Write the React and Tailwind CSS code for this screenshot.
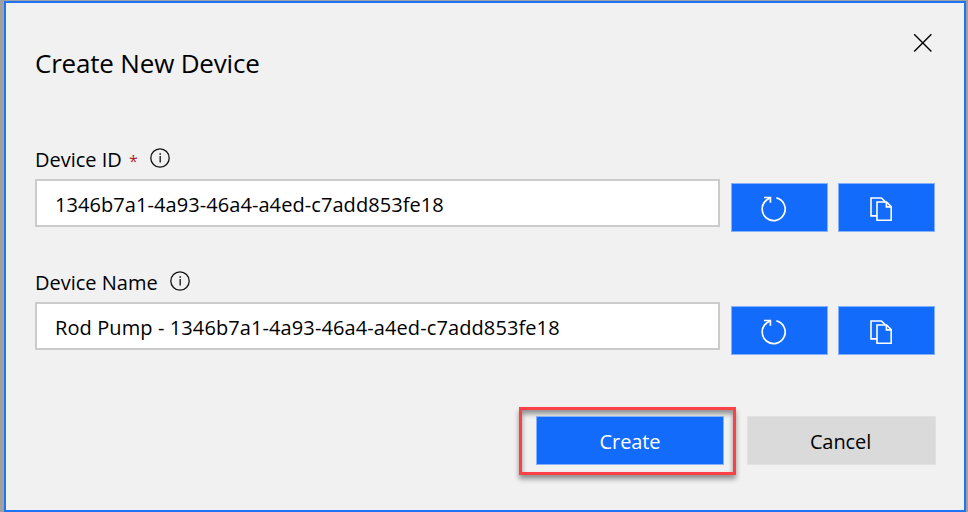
import React from "react";

function CloseIcon() {
  return (
    <svg width="20" height="20" viewBox="0 0 20 20" fill="none" stroke="#000" strokeWidth="1.4">
      <path d="M1.2 1.2 18.4 18.4M18.4 1.2 1.2 18.4" />
    </svg>
  );
}

function InfoIcon() {
  return (
    <svg width="20" height="20" viewBox="0 0 20 20" fill="none" stroke="#111" strokeWidth="1.3">
      <circle cx="10" cy="10" r="9.2" />
      <path d="M10.2 8v6.4" />
      <path d="M10.2 5.2v1.5" strokeWidth="1.5" />
    </svg>
  );
}

function RefreshIcon() {
  return (
    <svg width="26" height="26" viewBox="0 0 26 26" fill="none" stroke="#fff" strokeWidth="1.7">
      <path d="M16.4 1.9A11.5 11.5 0 1 1 6.6 4Q8.3 2.9 10 1.8" />
      <path d="M4 1.5H10.4V6.8" />
    </svg>
  );
}

function CopyIcon() {
  return (
    <svg width="22" height="24" viewBox="0 0 22 24" fill="none" stroke="#fff" strokeWidth="1.6">
      <path d="M7 18.9H1V1h10.4L15.4 4.8" />
      <path d="M7 5h9.6l4.6 4.6v13.6H7z" />
      <path d="M16.4 5v4.9H21" />
    </svg>
  );
}

function IconButton({ label, className, children }) {
  return (
    <button aria-label={label} className={"flex h-[49px] w-[97px] shrink-0 border border-[#83b2fb] bg-[#136bfb] " + className}>
      {children}
    </button>
  );
}

function Field({ label, required, value, valueSpacing }) {
  return (
    <div className="h-[123px]">
      <div className="flex h-[30px] items-start">
        <span className="mt-px text-[20px] leading-[24px] whitespace-nowrap">
          {label}
          {required && <span className="ml-[7px] text-[16px] text-[#a4262c]">*</span>}
        </span>
        <span className="ml-[12px] pt-px">
          <InfoIcon />
        </span>
      </div>
      <div className="flex">
        <div className="mt-[2px] flex h-[48px] w-[685px] shrink-0 items-center border-2 border-[#cbcbcb] bg-white pt-[3px] pl-[18px]">
          <span className={"text-[20px] leading-[28px] whitespace-nowrap " + valueSpacing}>{value}</span>
        </div>
        <div className="mt-[6px] ml-[11px] flex gap-[10px]">
          <IconButton label="Regenerate" className="pt-[12px] pl-[28px]">
            <RefreshIcon />
          </IconButton>
          <IconButton label="Copy" className="pt-[13px] pl-[31px]">
            <CopyIcon />
          </IconButton>
        </div>
      </div>
    </div>
  );
}

export default function App() {
  return (
    <div className="h-[512px] w-[968px] overflow-hidden bg-[#a0a0a0] pt-px pl-[4px] font-['Open_Sans','Noto_Sans',sans-serif] text-black">
      <div className="h-[511px] w-[962px] border-2 border-[#1f73f5] bg-[#f1f1f1] pr-[28px] pl-[29px]">
        <div className="flex h-[144px] items-start justify-between">
          <h1 className="mt-[42px] text-[26px] leading-[36px] tracking-[-0.19px] whitespace-nowrap">Create New Device</h1>
          <button aria-label="Close" className="mt-[30px] mr-[3px]">
            <CloseIcon />
          </button>
        </div>
        <Field label="Device ID" required value="1346b7a1-4a93-46a4-a4ed-c7add853fe18" valueSpacing="tracking-[0.07px]" />
        <Field label="Device Name" value="Rod Pump - 1346b7a1-4a93-46a4-a4ed-c7add853fe18" valueSpacing="tracking-[0.1px]" />
        <div className="mt-[14px] flex items-start justify-end">
          <div className="mr-[11px] h-[68px] w-[217px] border-[3px] border-[#fb4146] px-[14px] pt-[6px] shadow-[0_4px_5px_rgba(0,0,0,0.4),inset_0_4px_5px_rgba(0,0,0,0.4)]">
            <button className="flex h-[49px] w-[188px] items-center justify-center border border-[#83b2fb] bg-[#136bfb] pt-[2px] text-[20px] tracking-[-0.1px] text-white">Create</button>
          </div>
          <button className="mt-[9px] flex h-[49px] w-[189px] items-center justify-center border border-[#e1e1e1] bg-[#dadada] pt-[2px] pr-[2px] text-[20px] tracking-[-0.1px]">Cancel</button>
        </div>
      </div>
    </div>
  );
}
